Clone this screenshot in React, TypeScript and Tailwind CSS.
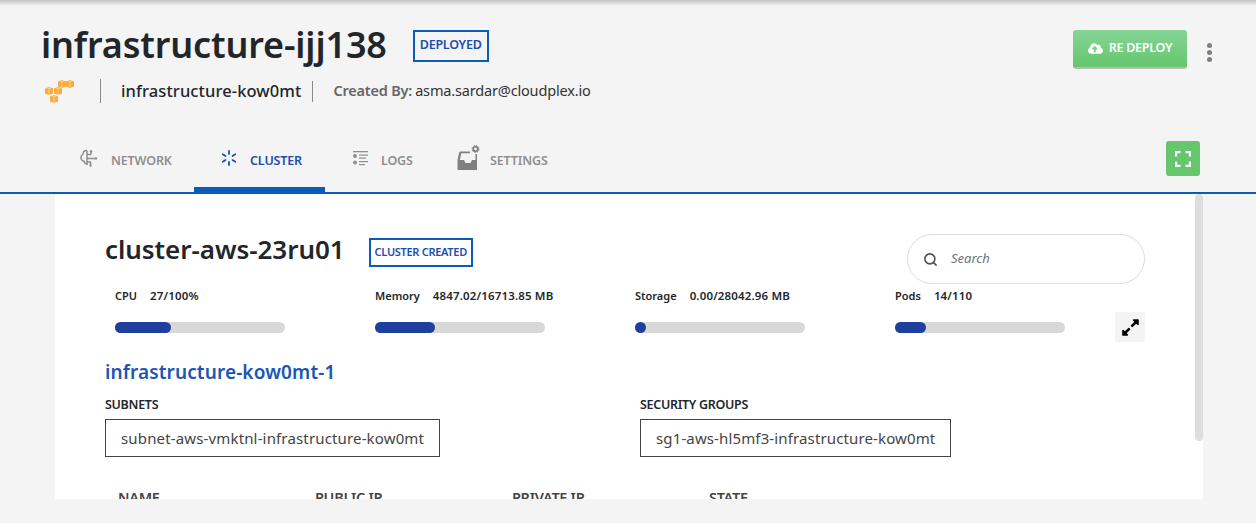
import React from 'react';
import { FaCloudUploadAlt, FaExpandAlt } from 'react-icons/fa';
import { Search } from 'lucide-react';

const font = { fontFamily: '"Noto Sans", "Open Sans", sans-serif' };

const Cube = ({ x, y }: { x: number; y: number }) => (
  <g transform={`translate(${x} ${y})`}>
    <path d="M0 1.4 4 0 8 1.4V6.600L4 8 0 6.600Z" fill='#f9ab3c' />
    <path d="M3.600 2.600 4 2.800 4.400 2.600V7.600H3.600Z" fill='#fde2b5' />
    <path d="M1.500 1.400 4 .6 6.500 1.400 4 2.200Z" fill='#fcd08f' />
  </g>
);

const AwsLogo = () => (
  <svg width='32' height='24' viewBox='0 0 32 24'>
    <Cube x={14} y={1} />
    <Cube x={22} y={1} />
    <Cube x={1} y={8} />
    <Cube x={10} y={8} />
    <Cube x={6} y={16} />
  </svg>
);

const NetworkIcon = () => (
  <svg width='18' height='18' viewBox='0 0 18 18' fill='none' stroke='#8f8f8f' strokeWidth='1.5'>
    <path d="M7 1.5C4 1.5 3 3.5 3 5 1.5 6 .8 7.5 1 9c.2 2 1.500 3 3 3.200.5 1.800 1.500 2.800 3.500 2.800" />
    <path d="M7 1.500V16M7 5.500h4M11 3v2.500M7 9.500h8.500M7 13h3.500v3" />
    <circle cx='11' cy='2.300' r='1.200' fill='#8f8f8f' stroke='none' />
    <circle cx='16' cy='9.500' r='1.200' fill='#8f8f8f' stroke='none' />
    <circle cx='10.500' cy='16.500' r='1.200' fill='#8f8f8f' stroke='none' />
  </svg>
);

const ClusterIcon = () => (
  <svg width='16' height='16' viewBox='0 0 16 16' fill='none' stroke='#1a4fb0' strokeWidth='1.800' strokeLinecap='round'>
    <path d="M8 1v3M8 12v3M1.800 4.300 4.500 6M11.500 10l2.700 1.700M1.800 11.700 4.500 10M11.500 6l2.700-1.700" />
  </svg>
);

const LogsIcon = () => (
  <svg width='17' height='16' viewBox='0 0 17 16' fill='#8f8f8f'>
    <rect x='1' y='1' width='15' height='1.300' />
    <circle cx='3' cy='6' r='2' />
    <circle cx='3' cy='12.500' r='2' />
    <rect x='7' y='4.500' width='9' height='1.200' />
    <rect x='7' y='7.500' width='7' height='1.200' />
    <rect x='7' y='11' width='9' height='1.200' />
    <rect x='7' y='14' width='6' height='1.200' />
  </svg>
);

const SettingsIcon = () => (
  <svg width='24' height='26' viewBox='0 0 24 26' fill='#808080'>
    <path d="M2 8 3 6.500h10v1.800H4.300L2.800 15H7l1.500 3h5L15 15h3.500V9H20v16H1.500Q.5 25 .5 24V15Z" />
    <circle cx='18.500' cy='4' r='2.300' fill='none' stroke='#808080' strokeWidth='1.800' />
    <circle cx='18.500' cy='4' r='3.500' fill='none' stroke='#808080' strokeWidth='1' strokeDasharray='1.400 1.350' />
  </svg>
);

const FullscreenIcon = () => (
  <svg width='16' height='16' viewBox='0 0 16 16' fill='none' stroke='#fff' strokeWidth='2.200'>
    <path d="M1.100 5.500V1.100H5.500M10.500 1.100H14.900V5.500M14.900 10.500V14.900H10.500M5.500 14.900H1.100V10.500" />
  </svg>
);

const tabs = [
  { label: 'NETWORK', icon: <NetworkIcon />, width: 'w-[114px]', gap: 'gap-[13px]', pad: 'pl-[0px]' },
  { label: 'CLUSTER', icon: <ClusterIcon />, width: 'w-[131px]', gap: 'gap-[13px]', pad: 'pl-[27px]', active: true },
  { label: 'LOGS', icon: <LogsIcon />, width: 'w-[132px]', gap: 'gap-[12px]', pad: 'pl-[27px]' },
  { label: 'SETTINGS', icon: <SettingsIcon />, width: 'w-[120px]', gap: 'gap-[9px]', pad: 'pl-[0px]' },
];

const stats = [
  { label: 'CPU', value: '27/100%', pct: 33 },
  { label: 'Memory', value: '4847.02/16713.85 MB', pct: 35 },
  { label: 'Storage', value: '0.00/28042.96 MB', pct: 6.500 },
  { label: 'Pods', value: '14/110', pct: 18 },
];

export default function App() {
  return (
    <div className='relative flex h-[523px] w-full flex-col overflow-hidden bg-[#f4f4f4]' style={font}>
      <div className='absolute inset-x-0 top-0 h-[6px] bg-gradient-to-b from-[#c4c4c4] to-[#f4f4f4]' />

      {/* header */}
      <div className='flex h-[141px] shrink-0 justify-between pl-[41px] pr-[44px] pt-[20px]'>
        <div>
          <div className='flex items-center'>
            <h1 className='text-[36px] font-semibold leading-[50px] tracking-[-0.15px] text-[#22262b]'>infrastructure-ijj138</h1>
            <span className='ml-[26px] mt-[1px] flex h-[32px] items-center border-2 border-[#0b5cb8] px-[5px] text-[12.500px] font-semibold tracking-[-0.250px] text-[#1a4fb0]'>DEPLOYED</span>
          </div>
          <div className='mt-[8px] flex h-[26px] items-center'>
            <div className='ml-[3px] w-[56px]'><AwsLogo /></div>
            <div className='h-[24px] w-px bg-[#8a8a8a]' />
            <span className='ml-[20px] text-[16.500px] font-medium tracking-[0.100px] text-[#22262b]'>infrastructure-kow0mt</span>
            <div className='ml-[11px] h-[21px] w-px bg-[#8a8a8a]' />
            <span className='ml-[20px] text-[14.500px] font-semibold tracking-[-0.200px] text-[#666]'>Created By:</span>
            <span className='ml-[3px] text-[14.500px] tracking-[-0.170px] text-[#333]'>asma.sardar@cloudplex.io</span>
          </div>
        </div>
        <div className='flex items-start gap-[20px] pt-[10px]'>
          <button className='flex h-[39px] w-[114px] items-center justify-center gap-[6px] rounded-[3px] border-b-2 border-[#b9b9b9] bg-gradient-to-b from-[#85d596] to-[#65c66d] text-[12.500px] font-semibold tracking-[-0.250px] text-white'>
            <FaCloudUploadAlt size={15} />
            RE DEPLOY
          </button>
          <div className='mt-[13px] flex flex-col gap-[2px]'>
            <span className='h-[5px] w-[5px] rounded-full bg-[#7f7f7f]' />
            <span className='h-[5px] w-[5px] rounded-full bg-[#7f7f7f]' />
            <span className='h-[5px] w-[5px] rounded-full bg-[#7f7f7f]' />
          </div>
        </div>
      </div>

      {/* tabs */}
      <div className='flex h-[53px] shrink-0 items-start justify-between border-b-2 border-[#0b5cb8] pl-[80px] pr-[56px]'>
        <div className='flex h-[51px]'>
          {tabs.map((t) => (
            <div key={t.label} className={`relative flex ${t.width} ${t.pad} ${t.gap} h-[38px] items-center text-[12.500px] font-semibold tracking-[-0.150px] ${t.active ? 'text-[#1a4fb0]' : 'text-[#8f8f8f]'}`}>
              <span className='mb-[4px]'>{t.icon}</span>
              <span className='mt-[2px]'>{t.label}</span>
              {t.active && <div className='absolute inset-x-0 top-[46px] h-[5px] bg-[#0b5cb8]' />}
            </div>
          ))}
        </div>
        <button className='flex h-[35px] w-[34px] items-center justify-center rounded-[3px] bg-[#65c66d]'>
          <FullscreenIcon />
        </button>
      </div>

      {/* panel */}
      <div className='relative ml-[55px] h-[305px] w-[1148px] shrink-0 overflow-hidden bg-white pl-[50px] pr-[58px] pt-[38px]'>
        <div className='absolute right-0 top-0 h-[247px] w-[8px] rounded-[4px] bg-[#dedede]' />

        <div className='flex items-start justify-between'>
          <div className='flex items-start pt-[6px]'>
            <h2 className='-mt-[3px] text-[26px] font-semibold leading-[28px] tracking-[-0.050px] text-[#22262b]'>cluster-aws-23ru01</h2>
            <span className='ml-[24px] flex h-[29px] items-center border-2 border-[#0b5cb8] px-[4px] text-[11px] font-semibold tracking-[-0.300px] text-[#1a4fb0]'>CLUSTER CREATED</span>
          </div>
          <div className='mt-[2px] flex h-[50px] w-[238px] items-center rounded-full border border-[#d8dee4] pl-[15px]'>
            <Search size={15} strokeWidth={2.500} className='text-[#495057]' />
            <span className='ml-[13px] text-[13px] italic text-[#6c757d]'>Search</span>
          </div>
        </div>

        <div className='mt-[3px] flex h-[52px] items-start'>
          {stats.map((s) => (
            <div key={s.label} className='w-[260px] pl-[10px]'>
              <div className='flex h-[18px] items-center text-[11.500px] font-semibold tracking-[0.150px] text-[#22262b]'>
                <span className='text-[11px] tracking-[0px]'>{s.label}</span>
                <span className='ml-[13px]'>{s.value}</span>
              </div>
              <div className='mt-[17px] h-[11px] w-[170px] rounded-full bg-[#d8d8d8]'>
                <div className='h-full rounded-full bg-[#1e3f9d]' style={{ width: `${s.pct}%` }} />
              </div>
            </div>
          ))}
          <div className='relative flex-1'>
            <div className='absolute right-0 top-[25px] flex h-[30px] w-[30px] items-center justify-center bg-[#f4f4f4] text-black'>
              <FaExpandAlt size={19} />
            </div>
          </div>
        </div>

        <h3 className='mt-[20px] text-[19px] font-semibold leading-[26px] tracking-[0.130px] text-[#1a56b5]'>infrastructure-kow0mt-1</h3>

        <div className='mt-[11px] flex'>
          <div className='w-[535px]'>
            <div className='text-[12.500px] font-semibold leading-[18px] tracking-[-0.300px] text-[#22262b]'>SUBNETS</div>
            <div className='mt-[5px] inline-flex h-[38px] items-center border border-[#444] px-[15px] text-[15px] tracking-[0.150px] text-[#444]'>subnet-aws-vmktnl-infrastructure-kow0mt</div>
          </div>
          <div>
            <div className='text-[12.500px] font-semibold leading-[18px] tracking-[-0.300px] text-[#22262b]'>SECURITY GROUPS</div>
            <div className='mt-[5px] inline-flex h-[38px] items-center border border-[#444] px-[15px] text-[15px] tracking-[0.130px] text-[#444]'>sg1-aws-hl5mf3-infrastructure-kow0mt</div>
          </div>
        </div>

        <div className='mt-[30px] grid grid-cols-[197px_197px_197px_197px] pl-[13px] text-[14.500px] font-semibold leading-[20px] tracking-[-0.300px] text-[#444]'>
          <span>NAME</span>
          <span>PUBLIC IP</span>
          <span>PRIVATE IP</span>
          <span>STATE</span>
        </div>
      </div>
    </div>
  );
}
